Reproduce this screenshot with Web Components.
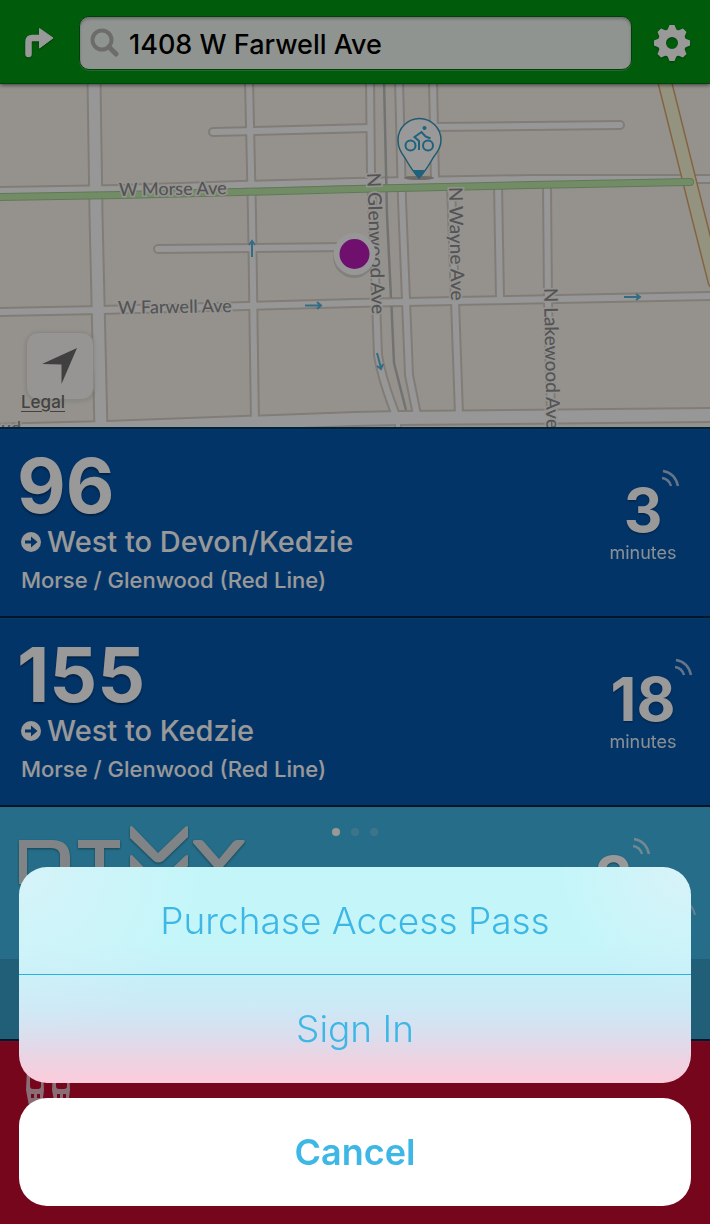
<!DOCTYPE html>
<html lang="en">
<head>
<meta charset="utf-8">
<meta name="viewport" content="width=device-width, initial-scale=1">
<title>Nearby routes</title>
<style>
  body {
    margin: 0;
    background: #c30a2d;
    font-family: Inter, "Open Sans", sans-serif;
  }
</style>
</head>
<body>
<transit-app></transit-app>

<script>
/**
 * @param {string} name
 * @param {string} html
 */
function define(name, html) {
  const template = document.createElement('template');
  template.innerHTML = html;

  customElements.define(name, class extends HTMLElement {
    constructor() {
      super();
      this.attachShadow({ mode: 'open' }).append(template.content.cloneNode(true));
    }
  });
}

const gearTeeth = [0, 45, 90, 135, 180, 225, 270, 315]
  .map((angle) => `<path d="M-5-12-2.500-18h5L5-12z" transform="rotate(${angle})"/>`)
  .join('');

define('search-bar', `
  <style>
    :host {
      box-sizing: border-box;
      display: flex;
      align-items: center;
      gap: 16px;
      height: 84px;
      padding: 2px 14px 0 15px;
      border-bottom: 1px solid #007010;
      background: #009912;
      box-shadow: 0 1px 4px rgba(0, 0, 0, 0.6);
      position: relative;
      z-index: 1;
    }
    button {
      flex: none;
      display: grid;
      place-items: center;
      width: 48px;
      height: 48px;
      padding: 0;
      border: 0;
      background: none;
      filter: drop-shadow(0 1px 1px rgba(0, 0, 0, 0.3));
    }
    label {
      flex: 1;
      min-width: 0;
      display: flex;
      align-items: center;
      gap: 10px;
      height: 52px;
      padding: 0 10px;
      border: 1px solid #006b10;
      border-radius: 10px;
      background: #f0f7f1;
      box-shadow: inset 0 2px 3px rgba(0, 0, 0, 0.25), 0 1px 0 #3fae4c;
    }
    input {
      flex: 1;
      min-width: 0;
      height: 46px;
      padding: 4px 0 0;
      border: 0;
      outline: 0;
      background: none;
      color: #000;
      font: 500 27px/46px Inter, sans-serif;
    }
  </style>
  <button aria-label="Directions">
    <svg width="30" height="32" viewBox="0 0 30 32">
      <path d="M4.500 27V15q0-4 4-4H17" fill="none" stroke="#fff" stroke-width="6.500" stroke-linecap="round"/>
      <path d="M15.500 1.500 29 11 15.500 21z" fill="#fff" stroke="#fff" stroke-width="1" stroke-linejoin="round"/>
    </svg>
  </button>
  <label>
    <svg width="29" height="29" viewBox="0 0 29 29" fill="none" stroke="#b5b5b2" role="img" aria-label="Search">
      <circle cx="12" cy="12" r="9.500" stroke-width="4"/>
      <path d="M19 19l7 7" stroke-width="5" stroke-linecap="round"/>
    </svg>
    <input type="text" value="1408 W Farwell Ave" aria-label="Address">
  </label>
  <button aria-label="Settings">
    <svg width="38" height="38" viewBox="-19 -19 38 38">
      <circle r="10" fill="none" stroke="#fff" stroke-width="8"/>
      <g fill="#fff">${gearTeeth}</g>
    </svg>
  </button>
`);

// The roads are listed once and stroked twice: casing first, then surface.
const roads = [
  [11, 'M94 80 L96 215 L101 430'],
  [6, 'M249 80 L252 215 L255 425'],
  [6, 'M213 132 L370 128'],
  [6, 'M433 127 L620 125'],
  [6, 'M-5 191 L120 189 L240 185 L355 182 L530 179 L715 179'],
  [6, 'M-5 312 L100 310 L355 303 L455 301 L715 296'],
  [6, 'M158 249 L345 247'],
  [12, 'M-5 431 L107 428 L355 419 L400 418 L715 415'],
  [6, 'M370 80 L371 173 L376 300 L378 355 Q382 380 397 418'],
  [6, 'M399 80 L402 200 L406 300 L409 375 L417 415'],
  [6, 'M433 80 L435 180'],
  [6, 'M451 185 L455 300 L459 415'],
  [6, 'M498 185 L500 298'],
  [6, 'M547 185 L548 300 L551 415'],
  [4, 'M398 420 L398 430'],
];
const strokeRoads = (color, extra) => roads
  .map(([width, d]) => `<path d="${d}" stroke="${color}" stroke-width="${width + extra}"/>`)
  .join('');

define('transit-map', `
  <style>
    :host {
      display: block;
      position: relative;
      overflow: hidden;
      border-bottom: 2px solid #03376a;
      background: #f8f4eb;
    }
    .map {
      display: block;
      width: 100%;
      height: auto;
    }
    .labels {
      font: 500 18px Lato, sans-serif;
      fill: #8c8c8c;
      stroke: #f8f6f2;
      stroke-width: 3px;
      paint-order: stroke;
    }
    .labels .down {
      font-size: 19px;
    }
    button {
      position: absolute;
      left: 26px;
      bottom: 27px;
      display: grid;
      place-items: center;
      width: 68px;
      height: 68px;
      padding: 0;
      border: 1px solid #e4e0da;
      border-radius: 12px;
      background: #fbf9f6;
      box-shadow: 0 1px 5px rgba(0, 0, 0, 0.12);
    }
    a {
      position: absolute;
      left: 21px;
      bottom: 13px;
      color: #6e6e6e;
      font: 500 17px/24px Inter, sans-serif;
      text-underline-offset: 3px;
    }
  </style>
  <svg class="map" viewBox="0 84 710 343" fill="none">
    <g stroke-linecap="round" stroke-linejoin="round">
      ${strokeRoads('#d8cfc4', 4)}
      ${strokeRoads('#fdfcfd', 0)}
      <path d="M384 80 L387 215 L391 298 M391.500 306 L394 363 L406 410" stroke="#bfbfbf" stroke-width="2.500" stroke-linecap="butt"/>
      <path d="M663 75 L698 215 L715 282" stroke="#dca56d" stroke-width="15"/>
      <path d="M663 75 L698 215 L715 282" stroke="#f7f6d4" stroke-width="12"/>
      <path d="M-5 197 L120 195 L240 192 L355 189 L530 185 L690 182" stroke="#9fca92" stroke-width="8"/>
      <path d="M-5 197 L120 195 L240 192 L355 189 L530 185 L690 182" stroke="#bfeaa9" stroke-width="6"/>
    </g>
    <g stroke="#56b5dc" stroke-width="2">
      <path d="M252 257V241M249 245l3-4 3 4"/>
      <path d="M305 305.500h16M317 302l4 3.500-4 3.500"/>
      <path d="M624 297h16M636 294l4 3-4 3"/>
      <path d="M377 353l4 15M377 366l4 3 2-5"/>
    </g>
    <g class="labels">
      <text x="119" y="196" transform="rotate(-1 119 196)">W Morse Ave</text>
      <text x="118" y="314" transform="rotate(-1 118 314)">W Farwell Ave</text>
      <text class="down" x="367" y="173" transform="rotate(88 367 173)">N Glenwood Ave</text>
      <text class="down" x="449" y="187" transform="rotate(89 449 187)">N Wayne Ave</text>
      <text class="down" x="544" y="288" transform="rotate(89 544 288)">N Lakewood Ave</text>
      <text x="1" y="434">ud</text>
    </g>
    <ellipse cx="419" cy="178" rx="15" ry="2" fill="#b8b3ab"/>
    <path d="M419 178 Q413 172 405 158 C400 151 398 147 398 140 A21.500 21.500 0 0 1 441 140 C441 147 438 151 433 158 Q425 172 419 178z" fill="#fff" stroke="#3597bd" stroke-width="1.500"/>
    <path d="M412 170h14l-7 8.500z" fill="#35a4d0"/>
    <g stroke="#35a4d0" stroke-width="2">
      <circle cx="410.500" cy="145.500" r="5"/>
      <circle cx="428" cy="145.500" r="5"/>
      <path d="M419 150v-9l-4.500-4 7-5 4 4.500 5 2"/>
      <circle cx="424.500" cy="128" r="2" fill="#35a4d0" stroke="none"/>
    </g>
    <circle cx="354" cy="257" r="21" fill="#000" opacity=".12"/>
    <circle cx="354.500" cy="254" r="21" fill="#fdfcfd"/>
    <circle cx="354.500" cy="254" r="15" fill="#b91cba"/>
  </svg>
  <button aria-label="Center on my location">
    <svg width="36" height="37" viewBox="0 0 36 37"><path d="M35 0 19.500 36V16.500L0 16z" fill="#6b6b6b"/></svg>
  </button>
  <a href="#legal">Legal</a>
`);

define('live-time', `
  <style>
    :host {
      display: flex;
      flex-direction: column;
      align-items: center;
      color: #fff;
    }
    .value {
      position: relative;
      font-size: 60px;
      font-weight: 700;
      line-height: 64px;
      text-shadow: 0 1px 2px rgba(0, 0, 0, 0.4);
    }
    svg {
      position: absolute;
      left: 100%;
      top: -9px;
    }
    .unit {
      font: 400 18px/22px Inter, sans-serif;
      opacity: 0.9;
    }
  </style>
  <div class="value">
    <slot></slot>
    <svg width="18" height="18" viewBox="0 0 18 18" fill="none" stroke="#fff" stroke-width="2.500" opacity=".65">
      <path d="M1 2Q13 4 16 17M0 9Q7 10 9 17"/>
    </svg>
  </div>
  <div class="unit"><slot name="unit"></slot></div>
`);

define('route-card', `
  <style>
    :host {
      display: grid;
      grid-template-columns: 1fr 134px;
      padding: 19px 0 17px 17px;
      border-top: 1px solid #07639f;
      border-bottom: 2px solid #02264d;
      background: #0557ae;
      color: #fff;
    }
    .number {
      font-size: 75px;
      font-weight: 700;
      line-height: 74px;
      text-shadow: 0 2px 2px rgba(0, 0, 0, 0.35);
    }
    .direction,
    .stop {
      display: flex;
      align-items: center;
      gap: 6px;
      padding-left: 4px;
      font-weight: 500;
      line-height: 38px;
    }
    .direction {
      font-size: 29px;
    }
    .stop {
      font-size: 22px;
    }
    ::slotted(live-time) {
      margin-top: 29px;
    }
  </style>
  <div>
    <div class="number"><slot name="number"></slot></div>
    <div class="direction">
      <svg width="20" height="20" viewBox="0 0 20 20">
        <circle cx="10" cy="10" r="10" fill="#fff"/>
        <path d="M4 8.500h6V4.500L16.500 10 10 15.500v-4H4z" fill="#0557ae"/>
      </svg>
      <slot></slot>
    </div>
    <div class="stop"><slot name="stop"></slot></div>
  </div>
  <slot name="time"></slot>
`);

define('bike-card', `
  <style>
    :host {
      display: block;
      border-top: 1px solid #4cb3cc;
      border-bottom: 2px solid #062a50;
      color: #fff;
    }
    .top {
      display: grid;
      grid-template-columns: 1fr auto 1fr;
      height: 151px;
      background: #3eb6e3;
    }
    .logo {
      margin: 18px 0 0 19px;
      filter: drop-shadow(0 1px 1px rgba(0, 0, 0, 0.4));
    }
    .dots {
      display: flex;
      gap: 11px;
      padding-top: 20px;
    }
    .dots i {
      width: 8px;
      height: 8px;
      border-radius: 50%;
      background: #fff;
      opacity: 0.2;
    }
    .dots i:first-child {
      opacity: 1;
    }
    .times {
      display: flex;
      justify-content: flex-end;
      align-items: flex-start;
      gap: 46px;
      padding: 38px 13px 0 0;
    }
    .signal {
      margin-top: 52px;
    }
    .bottom {
      height: 80px;
      background: #379dc8;
    }
  </style>
  <div class="top">
    <svg class="logo" width="226" height="60" viewBox="0 0 226 60" fill="#d5dde0" role="img" aria-label="Divvy">
      <path d="M0 14h33q18 0 18 18v12q0 14-18 14H0zM8 22v28h24q9 0 9-9V30q0-8-9-8z" fill-rule="evenodd"/>
      <path d="M59 14h42v8H85v36H76V22H59z"/>
      <path d="M111 1q1-2 3 0l25 26L166 1q3-2 3 0v10l-25 24q-5 3-9 0L111 12z"/>
      <path d="M111 30q1-2 3 0l25 26L166 30q3-2 3 0v10l-25 19h-9L111 41z"/>
      <path d="M174 15q0-1 3-1h5q2 0 4 3l14 16 14-17q2-2 4-2h6q3 0 1 3l-21 24v17h-9V41L174 17z"/>
    </svg>
    <div class="dots"><i></i><i></i><i></i></div>
    <div class="times">
      <slot name="time"></slot>
      <svg class="signal" width="18" height="18" viewBox="0 0 18 18" fill="none" stroke="#fff" stroke-width="2" opacity=".5">
        <path d="M1 2Q13 4 16 17M0 9Q7 10 9 17"/>
      </svg>
    </div>
  </div>
  <div class="bottom"></div>
`);

define('rail-card', `
  <style>
    :host {
      display: block;
      flex: 1;
      min-height: 100px;
      padding: 24px 26px;
      border-top: 1px solid #cb1236;
      background: #c30a2d;
    }
  </style>
  <svg width="44" height="44" viewBox="0 0 44 44" role="img" aria-label="Rail">
    <g fill="#e5b8c4" fill-rule="evenodd">
      <path d="M4 0h10q3 0 3 4l1 20-2 16H3L0 24 1 4q0-4 3-4zM4 10v10q0 3 3 3h5q3 0 3-3V10zM5 28v4h3v-4zM11 28v4h3v-4z"/>
      <path d="M30 0h10q3 0 3 4l1 20-2 16H29l-3-16 1-20q0-4 3-4zM30 10v10q0 3 3 3h5q3 0 3-3V10zM31 28v4h3v-4zM37 28v4h3v-4z"/>
    </g>
  </svg>
`);

define('action-sheet', `
  <style>
    :host {
      position: fixed;
      inset: 0;
      z-index: 2;
      display: flex;
      flex-direction: column;
      justify-content: flex-end;
      gap: 15px;
      padding: 18px 19px;
      background: rgba(0, 0, 0, 0.4);
    }
    .group,
    .cancel {
      overflow: hidden;
      border-radius: 28px;
      background: #fff;
    }
    .group {
      background:
        radial-gradient(circle at 0 0, rgba(225, 241, 248, 0.6), transparent 180px),
        radial-gradient(circle at 100% 0, rgba(225, 241, 248, 0.7), transparent 130px),
        linear-gradient(#c4f6f9 0 35%, #c7eff8 52%, #cce9f6 65%, #dddcec 80%, #eed2e1 90%, #fbcbdb);
    }
    ::slotted(button) {
      display: block;
      width: 100%;
      height: 108px;
      padding: 0;
      border: 0;
      background: none;
      color: #3db7e6;
      font: 300 37px/108px Inter, sans-serif;
    }
    ::slotted(button:first-child) {
      border-bottom: 1px solid #26b3dc;
    }
    ::slotted([slot="cancel"]) {
      font-size: 36px;
      font-weight: 600;
    }
  </style>
  <div class="group"><slot></slot></div>
  <div class="cancel"><slot name="cancel"></slot></div>
`);

define('transit-app', `
  <style>
    :host {
      display: flex;
      flex-direction: column;
      min-height: 100vh;
    }
  </style>
  <search-bar></search-bar>
  <transit-map></transit-map>
  <route-card>
    <span slot="number">96</span>
    West to Devon/Kedzie
    <span slot="stop">Morse / Glenwood (Red Line)</span>
    <live-time slot="time">3<span slot="unit">minutes</span></live-time>
  </route-card>
  <route-card>
    <span slot="number">155</span>
    West to Kedzie
    <span slot="stop">Morse / Glenwood (Red Line)</span>
    <live-time slot="time">18<span slot="unit">minutes</span></live-time>
  </route-card>
  <bike-card>
    <live-time slot="time">3</live-time>
  </bike-card>
  <rail-card></rail-card>
  <action-sheet role="dialog" aria-label="Account">
    <button>Purchase Access Pass</button>
    <button>Sign In</button>
    <button slot="cancel">Cancel</button>
  </action-sheet>
`);
</script>
</body>
</html>
